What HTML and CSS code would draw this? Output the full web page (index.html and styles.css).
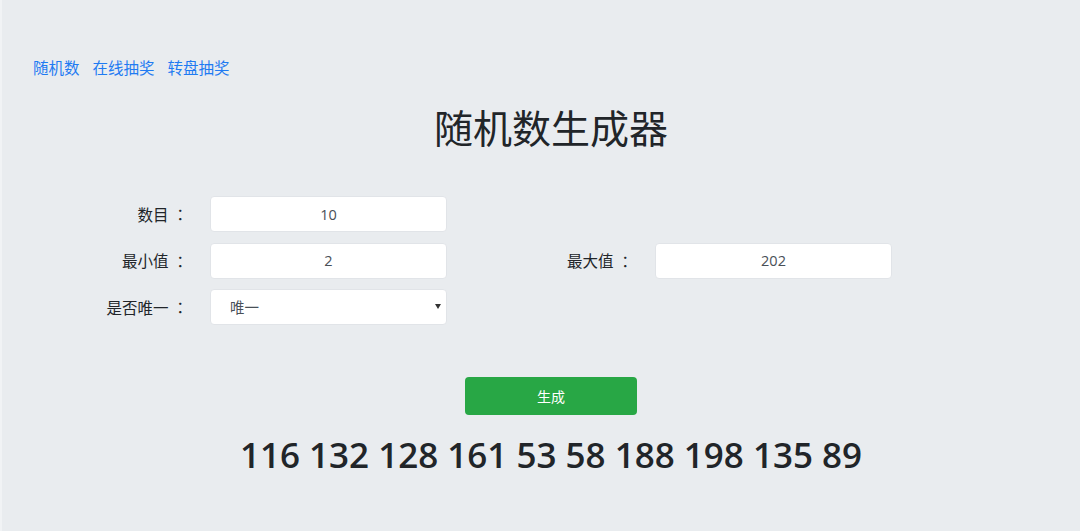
FILE: index.html
```html
<!DOCTYPE html>
<html lang="zh-CN">
<head>
<meta charset="utf-8">
<title>随机数生成器</title>
<link rel="stylesheet" href="styles.css">
</head>
<body>
<nav class="nav">
  <a class="nav-link" href="#">随机数</a>
  <a class="nav-link" href="#">在线抽奖</a>
  <a class="nav-link" href="#">转盘抽奖</a>
</nav>
<h1 class="title">随机数生成器</h1>
<form class="form">
  <label class="label">数目<span class="colon">：</span></label>
  <input class="field" type="text" value="10">
  <span class="empty"></span>
  <span class="empty"></span>

  <label class="label">最小值<span class="colon">：</span></label>
  <input class="field" type="text" value="2">
  <label class="label">最大值<span class="colon">：</span></label>
  <input class="field" type="text" value="202">

  <label class="label">是否唯一<span class="colon">：</span></label>
  <div class="select-wrap">
    <select class="field select">
      <option>唯一</option>
      <option>不唯一</option>
    </select>
    <svg class="caret" width="6" height="5" viewBox="0 0 6 5"><path d="M0 0H6L3 5Z" fill="#333"/></svg>
  </div>
</form>
<div class="actions">
  <button class="btn" type="button">生成</button>
</div>
<div class="result">116 132 128 161 53 58 188 198 135 89</div>
</body>
</html>
```
FILE: styles.css
```css
html, body {
  margin: 0;
  padding: 0;
}
body {
  background: #e9ecef;
  border-left: 2px solid #f1f3f5;
  min-height: 531px;
  box-sizing: border-box;
  font-family: "Open Sans", "Noto Sans CJK SC", sans-serif;
  color: #212529;
  padding-top: 58px;
}
.nav {
  display: flex;
  gap: 13px;
  padding-left: 31px;
  height: 20px;
  align-items: center;
}
.nav-link {
  color: #1f7bf2;
  text-decoration: none;
  font-size: 15.5px;
  line-height: 20px;
}
.title {
  margin: 26px 0 0;
  padding-left: 20px;
  text-align: center;
  font-weight: 400;
  font-size: 39px;
  line-height: 47px;
  color: #212529;
}
.form {
  display: grid;
  grid-template-columns: 164px 237px 164px 237px;
  grid-auto-rows: 36px;
  column-gap: 22px;
  row-gap: 10.5px;
  margin: 45px 0 0 22px;
}
.label {
  display: flex;
  align-items: center;
  justify-content: flex-end;
  font-size: 15.5px;
  color: #212529;
}
.colon {
  font-family: "Noto Sans CJK JP", sans-serif;
  padding-left: 4px;
}
.field {
  box-sizing: border-box;
  width: 237px;
  height: 36px;
  margin: 0;
  border: 1px solid #e1e4e8;
  border-radius: 4px;
  background: #fff;
  font-family: "Open Sans", "Noto Sans CJK SC", sans-serif;
  font-size: 14.5px;
  color: #495057;
  text-align: center;
  outline: none;
}
.select-wrap {
  position: relative;
  width: 237px;
  height: 36px;
}
.select {
  appearance: none;
  -webkit-appearance: none;
  text-align: left;
  padding: 0 0 0 19px;
}
.caret {
  position: absolute;
  left: 225px;
  top: 15px;
}
.actions {
  display: flex;
  justify-content: center;
  padding-left: 20px;
  margin-top: 52px;
}
.btn {
  width: 172px;
  height: 38px;
  border: none;
  border-radius: 4px;
  background: #28a745;
  color: #fff;
  font-family: "Open Sans", "Noto Sans CJK SC", sans-serif;
  font-size: 14px;
  padding: 0;
}
.result {
  margin-top: 17px;
  padding-left: 20px;
  text-align: center;
  font-size: 35px;
  font-weight: 600;
  line-height: 46px;
  color: #212529;
}
```
